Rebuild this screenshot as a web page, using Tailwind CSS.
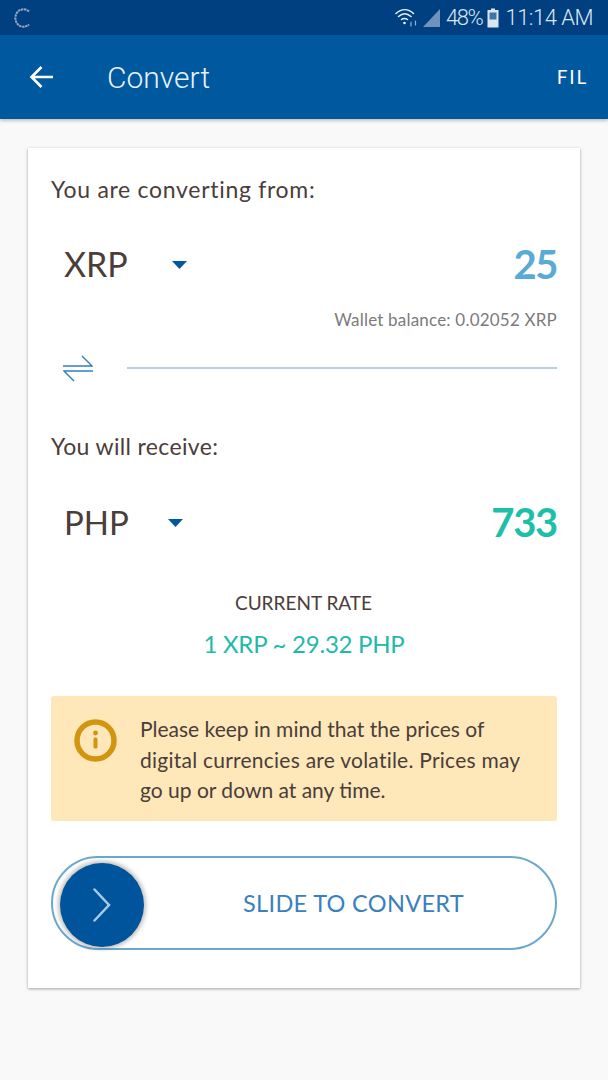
<!DOCTYPE html>
<html><head><meta charset="utf-8"><script src="https://cdn.jsdelivr.net/npm/@tailwindcss/browser@4"></script></head>
<body class="m-0 bg-[#f9f9f9]">
<div class="w-[608px] h-[1080px] overflow-hidden flex flex-col bg-[#f9f9f9] font-['Lato',sans-serif]">
  <div class="h-[35px] shrink-0 bg-[#003f80] flex items-center pl-[14px] pr-[15px] text-[#dbe6f2]">
    <svg width="17" height="20" viewBox="0 0 17 20" fill="none" stroke="#93a7bc" stroke-width="2"><path d="M15 3.500C12 0.500 7 0.500 4 3.500C0.500 7 0.500 13 4 16.500C7 19.500 12 19.500 15 16.500" stroke-dasharray="2.500 .6"/></svg>
    <div class="ml-auto flex items-center">
      <svg width="23" height="20" viewBox="0 0 23 20" fill="none" stroke="#eaf1f8" stroke-width="1.500" stroke-linecap="round"><path d="M1 5.500C6.500 0.500 13 0.500 18.500 5.500M3.500 8.500C7.500 5 12 5 16 8.500M6.500 11.500C8 10.300 11 10.300 12.500 11.500"/><circle cx="9.500" cy="15" r="1.300" fill="#eaf1f8" stroke="none"/><path d="M16 18v-4M20.500 13v4" stroke="#8fb4dc" stroke-width="1.200"/></svg>
      <svg class="ml-[5px]" width="17" height="18" viewBox="0 0 17 18"><path d="M17 0V18H0Z" fill="#6f93bd"/></svg>
      <span class="ml-[6px] text-[22px] leading-none tracking-[-1.400px] font-['Roboto',sans-serif] font-light">48%</span>
      <svg class="ml-[5px]" width="12" height="20" viewBox="0 0 12 20"><path d="M4 0.500h4v1.500h3.500v17.500H0.500V2H4z" fill="#dbe6f2"/><rect x="2.500" y="4.500" width="7" height="7" fill="#3f74ab"/></svg>
      <span class="ml-[6px] text-[22px] leading-none font-['Roboto',sans-serif] font-light tracking-[-0.5px]">11:14 AM</span>
    </div>
  </div>
  <header class="h-[84px] shrink-0 bg-[#00589f] flex items-center shadow-[0_2px_3px_rgba(0,0,0,0.22)] z-10 text-white">
    <svg class="ml-[29px]" width="25" height="24" viewBox="0 0 25 24" fill="none" stroke="#fff" stroke-width="2.600"><path d="M24 12H3M12.500 2L2.500 12L12.500 22"/></svg>
    <h1 class="ml-[53px] mt-[2px] text-[30px] font-['Roboto',sans-serif] font-light leading-none text-[#e8f1f8]">Convert</h1>
    <span class="ml-auto mr-[20px] text-[19px] tracking-[1.800px]">FIL</span>
  </header>
  <main class="mt-[29px] mx-[28px] h-[840px] shrink-0 bg-white shadow-[0_1px_3px_rgba(0,0,0,0.35)] px-[23px] text-[#4a3d3a]">
    <p class="pt-[26px] text-[23px] leading-[30px] tracking-[0.7px]">You are converting from:</p>
    <div class="mt-[36px] h-[48px] flex items-center">
      <span class="ml-[13px] w-[108px] text-[34px] leading-none">XRP</span>
      <svg width="15" height="8" viewBox="0 0 15 8" class="mt-[2px]"><path d="M0 0H15L7.500 8Z" fill="#00589f"/></svg>
      <span class="ml-auto text-[40px] leading-none font-bold text-[#5aaad6] tracking-[-1.400px]">25</span>
    </div>
    <p class="mt-[21px] text-right text-[17px] leading-[22px] tracking-[0.2px] text-[#7b7b7b]">Wallet balance: 0.02052 XRP</p>
    <div class="mt-[22px] h-[30px] flex items-center">
      <svg class="ml-[12px]" width="30" height="28" viewBox="0 0 30 28" fill="none" stroke="#2f7fbe" stroke-width="1.400"><path d="M0 12H29L19 2M30 17H1L11 27"/></svg>
      <div class="ml-[34px] flex-1 h-[2px] bg-[#b9cfd9]"></div>
    </div>
    <p class="mt-[48px] text-[23px] leading-[30px] tracking-[0.35px]">You will receive:</p>
    <div class="mt-[37px] h-[48px] flex items-center">
      <span class="ml-[13px] w-[104px] text-[33px] leading-none">PHP</span>
      <svg width="15" height="8" viewBox="0 0 15 8" class="mt-[2px]"><path d="M0 0H15L7.500 8Z" fill="#00589f"/></svg>
      <span class="ml-auto text-[40px] leading-none font-bold text-[#1dbfa9] tracking-[-1.300px]">733</span>
    </div>
    <p class="mt-[44px] text-center text-[19px] leading-[26px] -ml-[1px]">CURRENT RATE</p>
    <p class="mt-[13px] text-center text-[24px] leading-[30px] tracking-[-0.25px] text-[#1fb9aa]">1 XRP ~ 29.32 PHP</p>
    <div class="mt-[37px] h-[125px] rounded-[3px] bg-[#fee7b9] flex items-start">
      <svg class="ml-[23px] mt-[23px] shrink-0" width="43" height="43" viewBox="0 0 43 43" fill="none"><circle cx="21.500" cy="21.500" r="18.500" stroke="#d3940f" stroke-width="5.500"/><circle cx="21.500" cy="14" r="2.400" fill="#d3940f"/><rect x="19.500" y="18.500" width="4" height="11" rx="1.500" fill="#d3940f"/></svg>
      <p class="ml-[23px] mt-[18px] text-[21px] leading-[30.500px] whitespace-nowrap">Please keep in mind that the prices of<br><span class="tracking-[0.24px]">digital currencies are volatile. Prices may</span><br>go up or down at any time.</p>
    </div>
    <div class="relative mt-[35px] h-[94px] rounded-full border-2 border-[#6aa9cc] flex items-center">
      <div class="absolute left-[7px] top-[5px] w-[84px] h-[84px] rounded-full bg-[#00549c] shadow-[0_0_4px_2px_rgba(90,90,90,0.4)] flex items-center justify-center">
        <svg width="18" height="34" viewBox="0 0 18 34" fill="none" stroke="#a7cbe3" stroke-width="2.500" stroke-linecap="round"><path d="M1.500 1.500L16 17L1.500 32.500"/></svg>
      </div>
      <span class="ml-[190px] mt-[2px] text-[23.500px] leading-none tracking-[0.33px] text-[#3a80bb]">SLIDE TO CONVERT</span>
    </div>
  </main>
</div>
</body></html>
